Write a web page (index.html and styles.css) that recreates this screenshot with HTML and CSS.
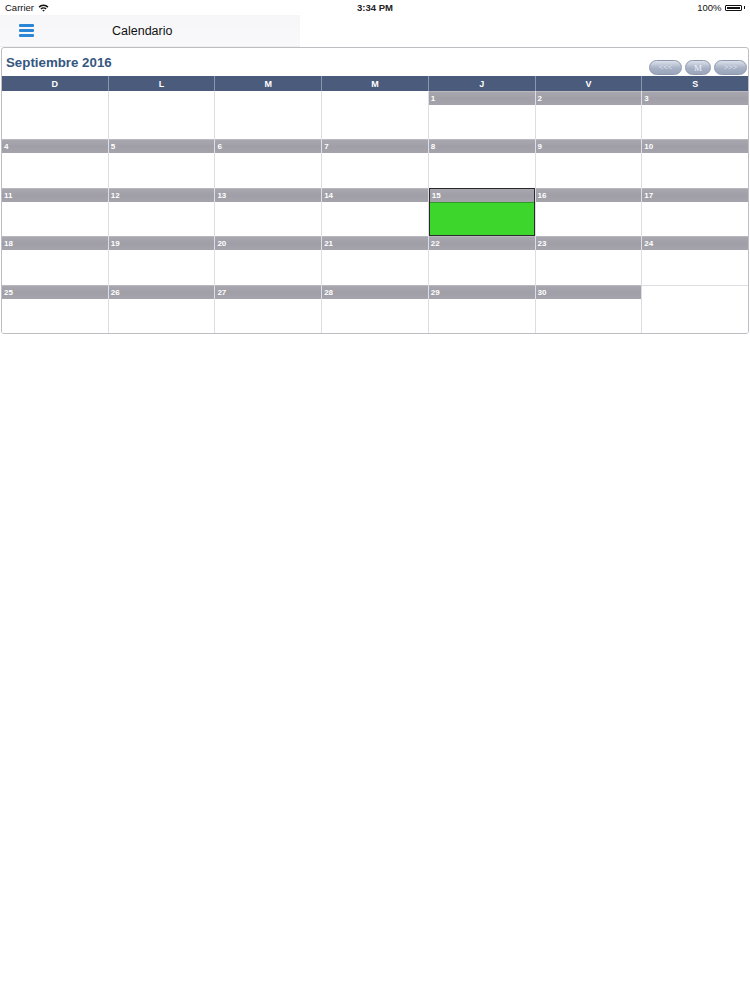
FILE: index.html
```html
<!DOCTYPE html>
<html lang="es">
<head>
<meta charset="utf-8">
<title>Calendario</title>
<link rel="stylesheet" href="styles.css">
</head>
<body>
<div class="status">
  <div class="st-left">Carrier
    <svg class="wifi" width="11" height="8" viewBox="0 0 11 8"><path d="M0.5 2.6 A7 7 0 0 1 10.5 2.6 L9.4 3.7 A5.4 5.4 0 0 0 1.6 3.7 Z" fill="#111"/><path d="M2.4 4.5 A4.3 4.3 0 0 1 8.6 4.5 L7.5 5.6 A2.7 2.7 0 0 0 3.5 5.6 Z" fill="#111"/><path d="M4.3 6.4 A1.7 1.7 0 0 1 6.7 6.4 L5.5 7.6 Z" fill="#111"/></svg>
  </div>
  <div class="st-time">3:34 PM</div>
  <div class="st-right">100%
    <span class="battery"><span class="batt-fill"></span></span><span class="batt-tip"></span>
  </div>
</div>
<div class="nav">
  <div class="nav-left">
    <span class="burger"><span></span><span></span><span></span></span>
    <span class="nav-title">Calendario</span>
  </div>
</div>
<div class="cal">
  <div class="cal-head">
    <div class="cal-title">Septiembre 2016</div>
    <div class="cal-btns">
      <span class="pill">&lt;&lt;&lt;</span>
      <span class="pill pill-m">M</span>
      <span class="pill">&gt;&gt;&gt;</span>
    </div>
  </div>
  <div class="dow">
    <div>D</div><div>L</div><div>M</div><div>M</div><div>J</div><div>V</div><div>S</div>
  </div>
  <div class="weeks">
    <div class="cell empty"></div><div class="cell empty"></div><div class="cell empty"></div><div class="cell empty"></div>
    <div class="cell"><div class="num">1</div></div><div class="cell"><div class="num">2</div></div><div class="cell"><div class="num">3</div></div>
    <div class="cell"><div class="num">4</div></div><div class="cell"><div class="num">5</div></div><div class="cell"><div class="num">6</div></div><div class="cell"><div class="num">7</div></div><div class="cell"><div class="num">8</div></div><div class="cell"><div class="num">9</div></div><div class="cell"><div class="num">10</div></div>
    <div class="cell"><div class="num">11</div></div><div class="cell"><div class="num">12</div></div><div class="cell"><div class="num">13</div></div><div class="cell"><div class="num">14</div></div><div class="cell today"><div class="num">15</div><div class="body"></div></div><div class="cell"><div class="num">16</div></div><div class="cell"><div class="num">17</div></div>
    <div class="cell"><div class="num">18</div></div><div class="cell"><div class="num">19</div></div><div class="cell"><div class="num">20</div></div><div class="cell"><div class="num">21</div></div><div class="cell"><div class="num">22</div></div><div class="cell"><div class="num">23</div></div><div class="cell"><div class="num">24</div></div>
    <div class="cell"><div class="num">25</div></div><div class="cell"><div class="num">26</div></div><div class="cell"><div class="num">27</div></div><div class="cell"><div class="num">28</div></div><div class="cell"><div class="num">29</div></div><div class="cell"><div class="num">30</div></div><div class="cell empty last"></div>
  </div>
</div>
</body>
</html>
```
FILE: styles.css
```css
html, body { margin: 0; padding: 0; background: #fff; }
body { font-family: "Liberation Sans", Arial, sans-serif; color: #111; width: 750px; }

.status { height: 15px; display: flex; align-items: center; justify-content: space-between; font-size: 9.5px; padding: 0 5px; position: relative; }
.st-left { display: flex; align-items: center; gap: 4px; }
.st-time { position: absolute; left: 0; right: 0; text-align: center; font-weight: bold; font-size: 9.5px; color: #222; pointer-events: none; }
.st-right { display: flex; align-items: center; gap: 2px; }
.battery { display: inline-block; width: 17px; height: 6px; border: 1px solid #111; border-radius: 1px; padding: 1px; box-sizing: border-box; margin-left: 1px; }
.batt-fill { display: block; width: 100%; height: 100%; background: #111; }
.batt-tip { display: inline-block; width: 1.5px; height: 3px; background: #111; }

.nav { height: 32px; display: flex; }
.nav-left { width: 300px; background: linear-gradient(#f6f6f8, #f9f9fb); display: flex; align-items: center; border-bottom: 1px solid #efeff2; box-sizing: border-box; }
.burger { display: flex; flex-direction: column; gap: 2.5px; margin-left: 19px; width: 15px; }
.burger span { display: block; height: 2.5px; background: #2b86d6; border-radius: 1px; }
.nav-title { margin-left: 78px; font-size: 12.5px; color: #111; }

.cal { margin: 0 1px; border: 1px solid #bdbdc2; border-radius: 3px; overflow: hidden; }
.cal-head { height: 28px; display: flex; align-items: flex-start; justify-content: space-between; }
.cal-title { font-weight: bold; font-size: 13.3px; color: #36577f; padding: 7px 0 0 4px; }
.cal-btns { display: flex; gap: 3px; padding: 12px 1px 0 0; }
.pill { display: inline-flex; align-items: center; justify-content: center; width: 33px; height: 15px; border-radius: 8px; border: 1px solid #8e98ad; box-sizing: border-box; background: linear-gradient(#dce2ec, #a7b1c5 55%, #9aa5bb); color: #eef1f7; font-family: "Liberation Serif", serif; font-size: 8px; }
.pill-m { width: 26px; font-size: 9px; }

.dow { display: grid; grid-template-columns: repeat(7, 1fr); column-gap: 1px; background: #8a96ad; height: 15px; }
.dow div { background: #4b5b7c; color: #fff; font-weight: bold; font-size: 9px; display: flex; align-items: center; justify-content: center; }

.weeks { display: grid; grid-template-columns: repeat(7, 1fr); grid-template-rows: repeat(5, 1fr); height: 242px; column-gap: 1px; background: #dedde2; }
.cell { background: #fff; display: flex; flex-direction: column; box-sizing: border-box; }
.num { height: 14px; background: linear-gradient(#a8a7af, #a09fa7 50%, #a5a4ac); color: #fff; font-weight: bold; font-size: 8px; padding-left: 2px; display: flex; align-items: center; border-top: 1px solid #b9b8bf; box-sizing: border-box; }
.cell.last { border-top: 1px solid #dedde2; }
.cell.today { border: 1px solid #2a2a2a; }
.cell.today .num { height: 13px; border-top: none; }
.cell.today .body { flex: 1; background: #3dd62c; border-top: 1px solid #2f9a25; }
```
